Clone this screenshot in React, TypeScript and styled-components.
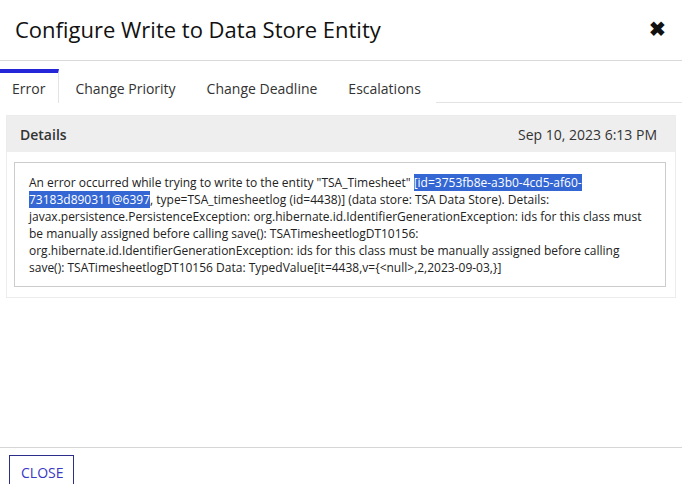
import React from "react";
import styled, { createGlobalStyle } from "styled-components";

const GlobalStyle = createGlobalStyle`
  html, body {
    margin: 0;
    padding: 0;
    background: #ffffff;
  }
  body {
    font-family: "Open Sans", "Noto Sans", sans-serif;
    color: #222;
  }
`;

const Dialog = styled.div`
  width: 682px;
  height: 484px;
  display: flex;
  flex-direction: column;
  overflow: hidden;
  background: #fff;
`;

const Header = styled.div`
  flex-shrink: 0;
  height: 61px;
  display: flex;
  align-items: center;
  justify-content: space-between;
  padding: 0 16px 2px 15px;
  border-bottom: 1px solid #d9d9d9;
  box-sizing: border-box;
`;

const Title = styled.h1`
  margin: 0;
  font-size: 22px;
  font-weight: 500;
  color: #111;
`;

const CloseIcon = styled.button`
  border: 0;
  background: none;
  padding: 0;
  font-size: 20px;
  font-weight: 700;
  line-height: 1;
  color: #111;
  cursor: pointer;
`;

const TabBar = styled.div`
  display: flex;
  margin-top: 8px;
  border-bottom: 1px solid #e3e3e3;
`;

const Tab = styled.div<{ $active?: boolean }>`
  font-size: 14px;
  color: #333;
  line-height: 20px;
  border-top: 4px solid ${(p) => (p.$active ? "#2626d9" : "transparent")};
  border-right: 1px solid ${(p) => (p.$active ? "#e3e3e3" : "transparent")};
  margin-bottom: -1px;
  background: #fff;
  padding: ${(p) => (p.$active ? "6px 13px 4px 12px" : "6px 14px 4px 16px")};
`;

const Body = styled.div`
  flex: 1;
  padding: 12px 6px 0;
`;

const Panel = styled.div`
  border: 1px solid #ececec;
  padding-bottom: 10px;
`;

const PanelHead = styled.div`
  height: 36px;
  display: flex;
  align-items: center;
  justify-content: space-between;
  background: #eeeeee;
  padding: 0 18px 0 13px;
  font-size: 14px;
`;

const PanelTitle = styled.span`
  font-weight: 600;
  color: #333;
`;

const Stamp = styled.span`
  color: #333;
`;

const Message = styled.div`
  margin: 10px 9px 0 7px;
  border: 1px solid #cccccc;
  padding: 11px 14px 10px;
  font-size: 12px;
  line-height: 17px;
  color: #222;
`;

const Selected = styled.span`
  background: #3467d4;
  color: #fff;
`;

const Footer = styled.div`
  flex-shrink: 0;
  box-sizing: border-box;
  height: 37px;
  border-top: 1px solid #d6d6d6;
  padding: 7px 9px 0;
`;

const CloseButton = styled.button`
  font-family: inherit;
  font-size: 14px;
  font-weight: 500;
  color: #3838c4;
  background: #fff;
  border: 1px solid #2d2d8c;
  padding: 7px 10px 8px 11px;
  line-height: 20px;
  cursor: pointer;
`;

export default function App() {
  return (
    <>
      <GlobalStyle />
      <Dialog>
        <Header>
          <Title>Configure Write to Data Store Entity</Title>
          <CloseIcon aria-label="close">✖</CloseIcon>
        </Header>
        <TabBar>
          <Tab $active>Error</Tab>
          <Tab>Change Priority</Tab>
          <Tab>Change Deadline</Tab>
          <Tab>Escalations</Tab>
        </TabBar>
        <Body>
          <Panel>
            <PanelHead>
              <PanelTitle>Details</PanelTitle>
              <Stamp>Sep 10, 2023 6:13 PM</Stamp>
            </PanelHead>
            <Message>
              An error occurred while trying to write to the entity
              "TSA_Timesheet" <Selected>[id=3753fb8e-a3b0-4cd5-af60-73183d890311@6397</Selected>,
              type=TSA_timesheetlog (id=4438)] (data store: TSA Data Store).
              Details: javax.persistence.PersistenceException:
              org.hibernate.id.IdentifierGenerationException: ids for this class
              must be manually assigned before calling save():
              TSATimesheetlogDT10156:
              org.hibernate.id.IdentifierGenerationException: ids for this class
              must be manually assigned before calling save():
              TSATimesheetlogDT10156 Data:
              TypedValue[it=4438,v=&#123;&lt;null&gt;,2,2023-09-03,&#125;]
            </Message>
          </Panel>
        </Body>
        <Footer>
          <CloseButton>CLOSE</CloseButton>
        </Footer>
      </Dialog>
    </>
  );
}
